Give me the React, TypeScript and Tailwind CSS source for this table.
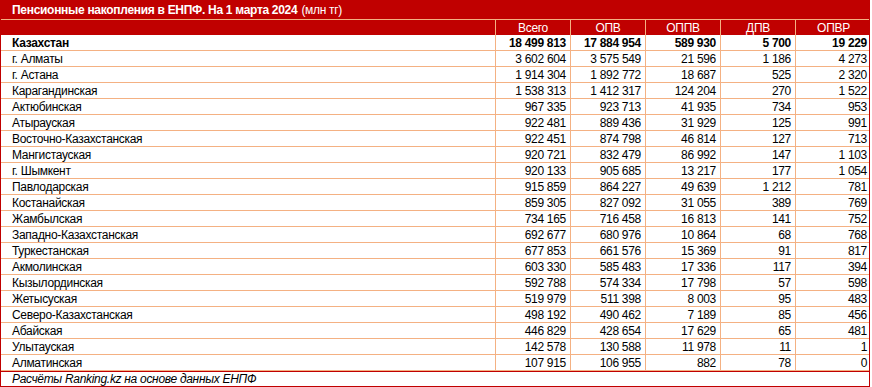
import React from 'react';

type Row = { name: string; vals: string[]; bold?: boolean };

const rows: Row[] = [
  { name: 'Казахстан', vals: ['18 499 813', '17 884 954', '589 930', '5 700', '19 229'], bold: true },
  { name: 'г. Алматы', vals: ['3 602 604', '3 575 549', '21 596', '1 186', '4 273'] },
  { name: 'г. Астана', vals: ['1 914 304', '1 892 772', '18 687', '525', '2 320'] },
  { name: 'Карагандинская', vals: ['1 538 313', '1 412 317', '124 204', '270', '1 522'] },
  { name: 'Актюбинская', vals: ['967 335', '923 713', '41 935', '734', '953'] },
  { name: 'Атырауская', vals: ['922 481', '889 436', '31 929', '125', '991'] },
  { name: 'Восточно-Казахстанская', vals: ['922 451', '874 798', '46 814', '127', '713'] },
  { name: 'Мангистауская', vals: ['920 721', '832 479', '86 992', '147', '1 103'] },
  { name: 'г. Шымкент', vals: ['920 133', '905 685', '13 217', '177', '1 054'] },
  { name: 'Павлодарская', vals: ['915 859', '864 227', '49 639', '1 212', '781'] },
  { name: 'Костанайская', vals: ['859 305', '827 092', '31 055', '389', '769'] },
  { name: 'Жамбылская', vals: ['734 165', '716 458', '16 813', '141', '752'] },
  { name: 'Западно-Казахстанская', vals: ['692 677', '680 976', '10 864', '68', '768'] },
  { name: 'Туркестанская', vals: ['677 853', '661 576', '15 369', '91', '817'] },
  { name: 'Акмолинская', vals: ['603 330', '585 483', '17 336', '117', '394'] },
  { name: 'Кызылординская', vals: ['592 788', '574 334', '17 798', '57', '598'] },
  { name: 'Жетысуская', vals: ['519 979', '511 398', '8 003', '95', '483'] },
  { name: 'Северо-Казахстанская', vals: ['498 192', '490 462', '7 189', '85', '456'] },
  { name: 'Абайская', vals: ['446 829', '428 654', '17 629', '65', '481'] },
  { name: 'Улытауская', vals: ['142 578', '130 588', '11 978', '11', '1'] },
  { name: 'Алматинская', vals: ['107 915', '106 955', '882', '78', '0'] },
];

const heads = ['Всего', 'ОПВ', 'ОППВ', 'ДПВ', 'ОПВР'];

const App: React.FC = () => {
  return (
    <div className="w-[872px] h-[387px] bg-white text-[12px] leading-none tracking-[-0.3px] text-black font-['Liberation_Sans',Arial,sans-serif]">
      <div className="w-[870px] border-x border-[#c00000]">
        {/* Title */}
        <div className="h-[20px] bg-[#c00000] border-b border-[#f4b183] flex items-center pl-[11px] text-white">
          <span className="font-bold">Пенсионные накопления в ЕНПФ. На 1 марта 2024</span>
          <span className="ml-1">(млн тг)</span>
        </div>

        {/* Column headers */}
        <div className="h-[15px] bg-[#c00000] grid grid-cols-[495px_repeat(5,75px)] text-white">
          <div className="border-r border-[#f4b183]" />
          {heads.map((h, i) => (
            <div
              key={h}
              className={`flex items-center justify-center ${i < 4 ? 'border-r border-[#f4b183]' : ''}`}
            >
              {h}
            </div>
          ))}
        </div>

        {/* Data rows */}
        {rows.map((r) => (
          <div
            key={r.name}
            className={`h-[16px] grid grid-cols-[495px_repeat(5,75px)] border-b border-[#f4b183] ${r.bold ? 'font-bold' : ''}`}
          >
            <div className="flex items-center pl-[11px] border-r border-[#f4b183]">{r.name}</div>
            {r.vals.map((v, i) => (
              <div
                key={i}
                className={`flex items-center justify-end pr-[4px] ${i < 4 ? 'border-r border-[#f4b183]' : ''}`}
              >
                {v}
              </div>
            ))}
          </div>
        ))}

        {/* Footer */}
        <div className="h-[16px] border-y border-[#c00000] flex items-center pl-[11px] italic">
          Расчёты Ranking.kz на основе данных ЕНПФ
        </div>
      </div>
    </div>
  );
};

export default App;
